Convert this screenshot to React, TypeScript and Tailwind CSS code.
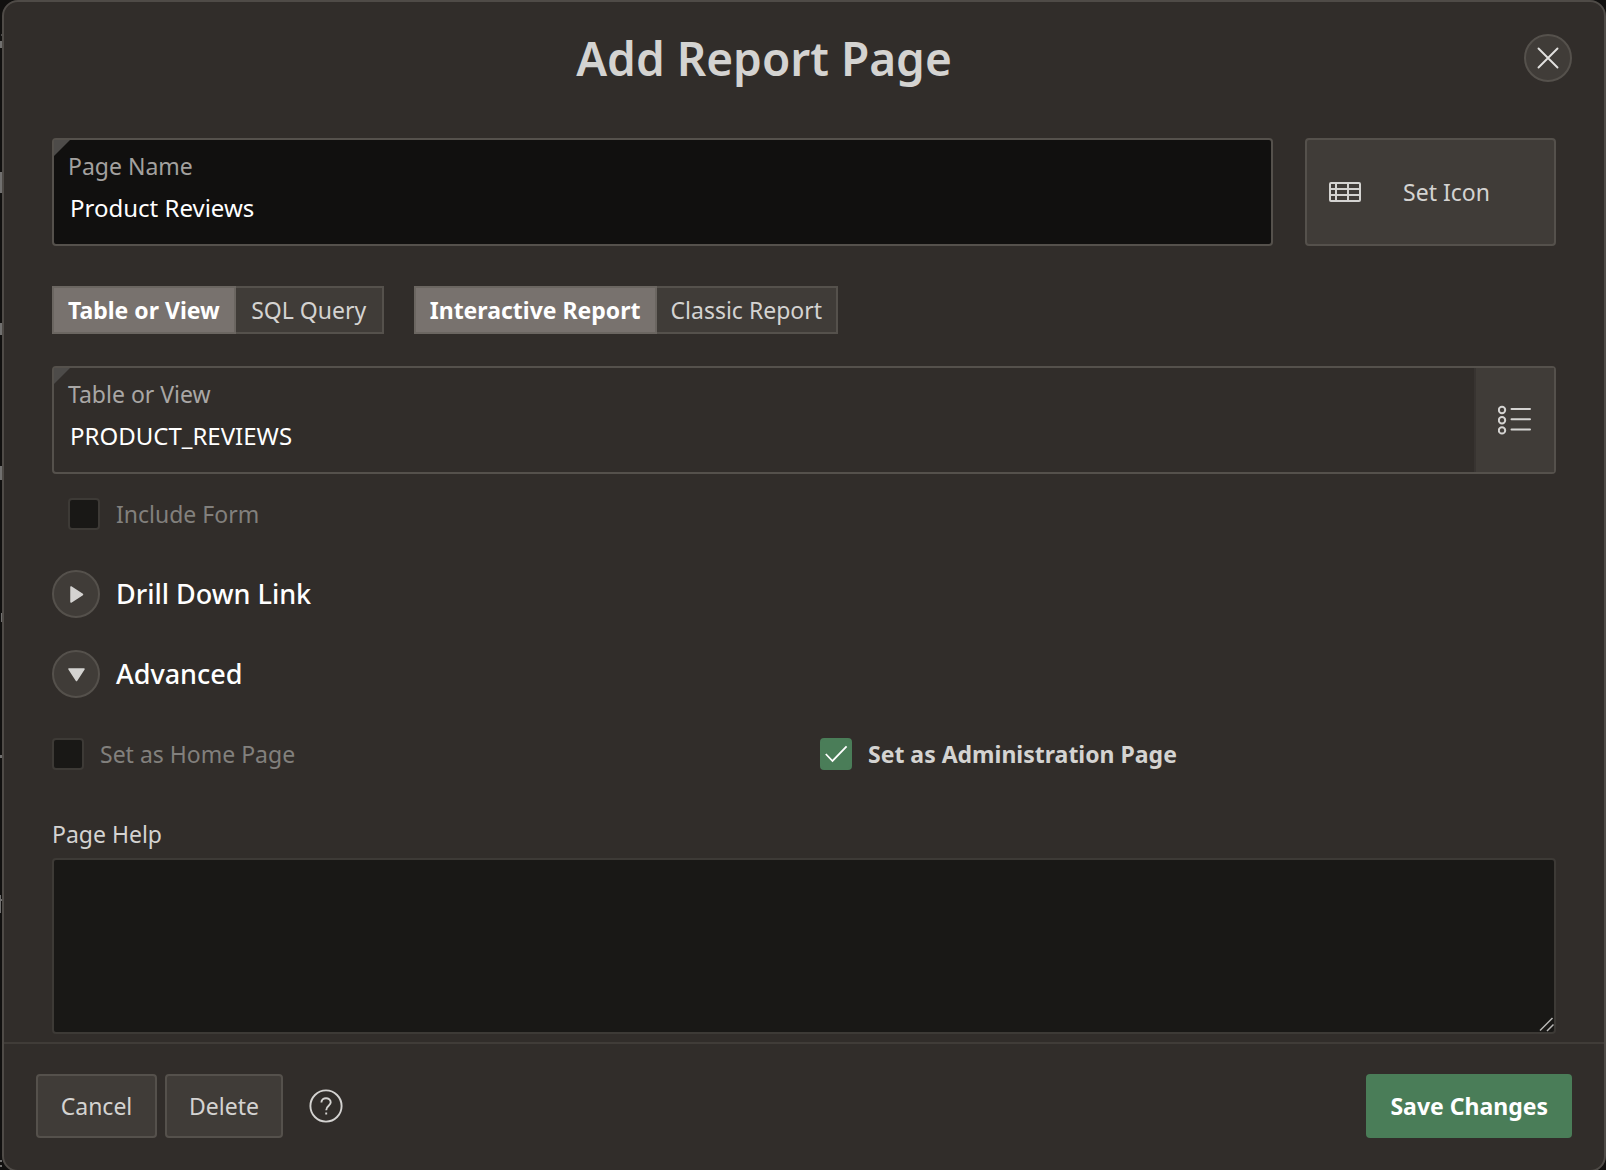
import React, { useState } from "react";

const focusRing = "focus-visible:outline-2 focus-visible:outline-[#8fb8a0]";

type SegmentedProps = {
  name: string;
  groupLabel: string;
  options: string[];
};

function Segmented({ name, groupLabel, options }: SegmentedProps) {
  const [value, setValue] = useState(options[0]);
  return (
    <div role="radiogroup" aria-label={groupLabel} className="flex">
      {options.map((option) => (
        <label
          key={option}
          className="relative flex h-12 min-w-[148px] cursor-pointer items-center justify-center border-2 border-l-0 border-[#55514c] bg-[#403c38] px-[14px] text-[#d4d3d1] first-of-type:border-l-2 has-checked:border-[#6b6661] has-checked:bg-[#78726e] has-checked:font-bold has-checked:text-white"
        >
          <input
            type="radio"
            name={name}
            value={option}
            checked={value === option}
            onChange={() => setValue(option)}
            className="absolute inset-0 cursor-pointer appearance-none"
          />
          {option}
        </label>
      ))}
    </div>
  );
}

type CheckProps = {
  id: string;
  label: string;
  defaultChecked?: boolean;
};

function Check({ id, label, defaultChecked = false }: CheckProps) {
  return (
    <div className="flex h-8 items-center gap-4">
      <span className="relative flex size-8 shrink-0">
        <input
          id={id}
          type="checkbox"
          defaultChecked={defaultChecked}
          className={`peer size-8 appearance-none rounded border-2 border-[#3d3a36] bg-[#191816] checked:border-[#4a7d58] checked:bg-[#4a7d58] ${focusRing}`}
        />
        <svg
          viewBox="0 0 32 32"
          className="pointer-events-none absolute inset-0 hidden peer-checked:block"
          fill="none"
          stroke="#ffffff"
          strokeWidth="1.8"
          aria-hidden="true"
        >
          <path d="M5.8 16 L12.5 23 L26.6 8.4" />
        </svg>
      </span>
      <label
        htmlFor={id}
        className={
          defaultChecked ? "font-bold text-[#d4d3d1]" : "text-[#82807d]"
        }
      >
        {label}
      </label>
    </div>
  );
}

function RequiredMark() {
  return (
    <svg
      viewBox="0 0 16 16"
      className="pointer-events-none absolute top-0 left-0 size-4"
      aria-hidden="true"
    >
      <path d="M0 0H16L0 16Z" fill="#4d4b49" />
    </svg>
  );
}

/* Sliver of the dimmed page that stays visible beside the dialog. */
function PageEdge() {
  return (
    <svg
      viewBox="0 0 2 1170"
      className="h-[1170px] w-0.5 shrink-0"
      fill="#71706f"
      aria-hidden="true"
    >
      <rect x="1" y="34" width="1" height="2" fill="#4a4948" />
      <rect x="0" y="41" width="2" height="7" />
      <rect x="0" y="172" width="2" height="21" />
      <rect x="0" y="323" width="2" height="12" />
      <rect x="0" y="466" width="2" height="14" />
      <rect x="1" y="613" width="1" height="9" />
      <rect x="0" y="755" width="2" height="3" />
      <rect x="0" y="895" width="1" height="18" />
      <rect x="0" y="899" width="2" height="2" />
      <rect x="0" y="1160" width="2" height="2" />
      <rect x="0" y="1165" width="2" height="2" />
    </svg>
  );
}

type DisclosureProps = {
  title: string;
  open: boolean;
  onToggle: () => void;
};

function Disclosure({ title, open, onToggle }: DisclosureProps) {
  return (
    <h2>
      <button
        type="button"
        aria-expanded={open}
        onClick={onToggle}
        className={`flex h-12 items-center gap-4 text-[27px] leading-8 font-medium text-white ${focusRing}`}
      >
        <span className="flex size-12 items-center justify-center rounded-full border-2 border-[#55514c] bg-[#403c38]">
          <svg viewBox="0 0 44 44" className="size-11" aria-hidden="true">
            <path
              d={open ? "M15 17H30L22.5 28.5Z" : "M17 15V30L28.5 22.5Z"}
              fill="#d4d3d1"
              stroke="#d4d3d1"
              strokeWidth="1.5"
              strokeLinejoin="round"
            />
          </svg>
        </span>
        {title}
      </button>
    </h2>
  );
}

export default function App() {
  const [drillOpen, setDrillOpen] = useState(false);
  const [advancedOpen, setAdvancedOpen] = useState(true);

  return (
    <div className="flex h-screen overflow-hidden bg-[#11100f] font-['Noto_Sans',sans-serif] text-[23px] leading-8 text-[#d4d3d1]">
      <PageEdge />
      <div
        role="dialog"
        aria-labelledby="dialog-title"
        className="flex h-[calc(100vh+2px)] min-w-0 flex-1 flex-col rounded-[16px] border-2 border-[#4f4b47] bg-[#312d2a]"
      >
        <header className="flex items-center pt-6 pr-8">
          <h1
            id="dialog-title"
            className="flex-1 text-center text-[46px] leading-[64px] font-semibold"
          >
            Add Report Page
          </h1>
          <button
            type="button"
            aria-label="Close"
            className={`flex size-12 items-center justify-center rounded-full border-2 border-[#55514c] bg-[#403c38] ${focusRing}`}
          >
            <svg
              viewBox="0 0 24 24"
              className="size-6"
              stroke="#e2e1df"
              strokeWidth="1.9"
              strokeLinecap="round"
              aria-hidden="true"
            >
              <path d="M2.5 2.5L21.5 21.5M21.5 2.5L2.5 21.5" />
            </svg>
          </button>
        </header>

        <main className="flex min-h-0 flex-1 flex-col px-12 pt-12 pb-2">
          <div className="flex gap-8">
            <div className="relative flex h-[108px] flex-1 flex-col rounded border-2 border-[#55514c] bg-[#11100f] px-[14px] pt-2.5">
              <RequiredMark />
              <label htmlFor="page-name" className="text-[#a3a19f]">
                Page Name
              </label>
              <input
                id="page-name"
                type="text"
                defaultValue="Product Reviews"
                className="mt-2.5 h-8 bg-transparent pl-0.5 text-2xl text-white outline-none"
              />
            </div>
            <button
              type="button"
              className={`flex w-[251px] items-center rounded border-2 border-[#55514c] bg-[#403c38] pl-[22px] ${focusRing}`}
            >
              <svg
                viewBox="0 0 32 20"
                className="h-5 w-8"
                fill="none"
                stroke="#d4d3d1"
                strokeWidth="2"
                aria-hidden="true"
              >
                <rect x="1" y="1" width="30" height="18" rx="1" />
                <path d="M1 7H31M1 13H31M7 1V19M19 1V19" />
              </svg>
              <span className="flex-1 pr-[22px] text-center">Set Icon</span>
            </button>
          </div>

          <div className="mt-10 flex gap-[30px]">
            <Segmented
              name="source"
              groupLabel="Source"
              options={["Table or View", "SQL Query"]}
            />
            <Segmented
              name="report-type"
              groupLabel="Report type"
              options={["Interactive Report", "Classic Report"]}
            />
          </div>

          <div className="relative mt-8 flex h-[108px] shrink-0 rounded border-2 border-[#55514c]">
            <RequiredMark />
            <div className="flex flex-1 flex-col px-[14px] pt-2.5">
              <label htmlFor="table-name" className="text-[#a9a7a5]">
                Table or View
              </label>
              <input
                id="table-name"
                type="text"
                defaultValue="PRODUCT_REVIEWS"
                className="mt-2.5 h-8 bg-transparent pl-0.5 text-2xl text-white outline-none"
              />
            </div>
            <button
              type="button"
              aria-label="Choose table or view"
              className={`flex w-20 items-center justify-center border-l-2 border-[#383431] bg-[#403c38] ${focusRing}`}
            >
              <svg
                viewBox="0 0 34 30"
                className="h-[30px] w-[34px]"
                fill="none"
                stroke="#d4d3d1"
                strokeWidth="2"
                strokeLinecap="round"
                aria-hidden="true"
              >
                <circle cx="4" cy="5" r="3.2" />
                <circle cx="4" cy="15.2" r="3.2" />
                <circle cx="4" cy="25.4" r="3.2" />
                <path d="M13.500 4H32M13.500 14.200H32M13.500 24.400H32" />
              </svg>
            </button>
          </div>

          <div className="mt-6 pl-4">
            <Check id="include-form" label="Include Form" />
          </div>

          <div className="mt-10 flex flex-col gap-8">
            <Disclosure
              title="Drill Down Link"
              open={drillOpen}
              onToggle={() => setDrillOpen(!drillOpen)}
            />
            <Disclosure
              title="Advanced"
              open={advancedOpen}
              onToggle={() => setAdvancedOpen(!advancedOpen)}
            />
          </div>

          {advancedOpen && (
            <>
              <div className="mt-10 grid grid-cols-2 gap-8">
                <Check id="home-page" label="Set as Home Page" />
                <Check
                  id="admin-page"
                  label="Set as Administration Page"
                  defaultChecked
                />
              </div>

              <label htmlFor="page-help" className="mt-12">
                Page Help
              </label>
              <div className="relative mt-2 flex min-h-0 flex-1">
                <textarea
                  id="page-help"
                  className="w-full resize-none rounded border-2 border-[#3d3a36] bg-[#191816] px-3.5 py-2 text-white outline-none"
                />
                <svg
                  viewBox="0 0 16 16"
                  className="pointer-events-none absolute right-0.5 bottom-0.5 size-4"
                  stroke="#b9b8b6"
                  strokeWidth="1.5"
                  aria-hidden="true"
                >
                  <path d="M2 14.5L14.5 2M9 15L15.5 8.5" />
                </svg>
              </div>
            </>
          )}
        </main>

        <footer className="flex items-center border-t-2 border-[#403c38] px-8 pt-[30px] pb-8">
          <div className="flex items-center gap-2">
            <button
              type="button"
              className={`h-16 min-w-[121px] rounded border-2 border-[#55514c] bg-[#403c38] px-[22px] ${focusRing}`}
            >
              Cancel
            </button>
            <button
              type="button"
              className={`h-16 rounded border-2 border-[#55514c] bg-[#403c38] px-[22px] ${focusRing}`}
            >
              Delete
            </button>
          </div>
          <button
            type="button"
            aria-label="Help"
            className={`ml-[26px] rounded-full ${focusRing}`}
          >
            <svg
              viewBox="0 0 34 34"
              className="size-[34px]"
              fill="none"
              stroke="#d4d3d1"
              strokeWidth="1.9"
              aria-hidden="true"
            >
              <circle cx="17" cy="17" r="15.6" />
              <path d="M12.4 13.5C12.4 7.8 21.7 7.8 21.7 13.3C21.7 17 17.2 16.5 17.2 21.3" />
              <path d="M17.2 23.500V25.500" />
            </svg>
          </button>
          <button
            type="button"
            className={`ml-auto h-16 rounded bg-[#4a7d58] px-6 font-bold text-white ${focusRing}`}
          >
            Save Changes
          </button>
        </footer>
      </div>
    </div>
  );
}
